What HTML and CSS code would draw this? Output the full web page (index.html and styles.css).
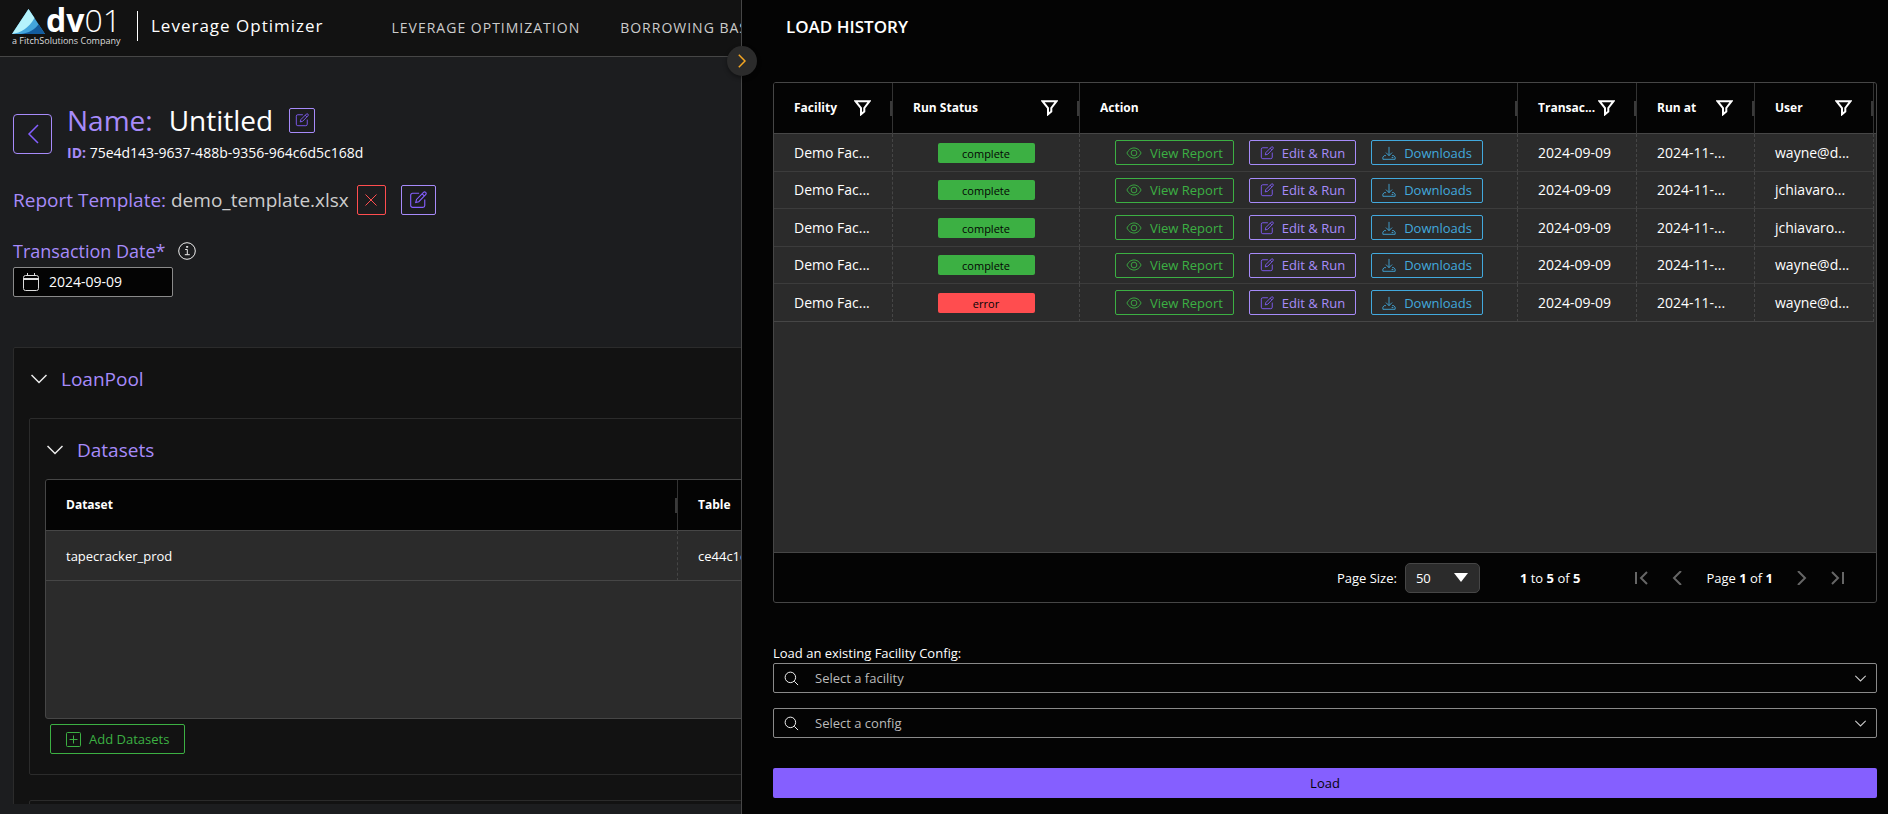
FILE: index.html
```html
<!DOCTYPE html>
<html lang="en">
<head>
<meta charset="utf-8">
<title>Leverage Optimizer</title>
<link rel="stylesheet" href="styles.css">
</head>
<body>
<svg class="sprite" aria-hidden="true">
  <symbol id="i-edit" viewBox="0 0 16 16"><path d="M9 2H3.2A1.7 1.7 0 0 0 1.5 3.700v9.100a1.700 1.700 0 0 0 1.700 1.700h9.100a1.700 1.700 0 0 0 1.700-1.700V7.500M6 10.200l.7-2.700 6.200-6.200a1.300 1.300 0 0 1 1.900 1.900L8.700 9.500zM11.700 2.500l1.900 1.900"/></symbol>
  <symbol id="i-eye" viewBox="0 0 18 14"><path d="M1 7c2-3.800 4.800-5.700 8-5.700S15 3.200 17 7c-2 3.800-4.800 5.700-8 5.700S3 10.800 1 7z"/><circle cx="9" cy="7" r="3.200"/></symbol>
  <symbol id="i-download" viewBox="0 0 16 16"><path d="M8 1v10M4.500 7.500L8 11 11.500 7.500M4.500 11H2.500L1 12.700v2.500h14v-2.500L13.500 11h-2M11 13.200h2"/></symbol>
  <symbol id="i-filter" viewBox="0 0 17 16"><path d="M1.500 1.200h14L10.300 8v3.600L7 14.300V8z"/></symbol>
  <symbol id="i-down" viewBox="0 0 16 10"><path d="M.5 1L8 8.500 15.500 1"/></symbol>
  <symbol id="i-search" viewBox="0 0 16 16"><circle cx="6.800" cy="6.800" r="5.600"/><path d="M11 11l4 4"/></symbol>
</svg>

<header class="topbar">
  <div class="brand">
    <svg class="mark" viewBox="0 0 33 26" aria-hidden="true"><path d="M16.500 0L33 25H0z" fill="#43a5dc"/><path d="M16.500 0L0 25c9-1 17-6 22.500-15.900z" fill="#b5f3fc"/><path d="M26.500 15.200L33 25H9c8-1 13.500-4.500 17.500-9.800z" fill="#145c9e"/></svg>
    <span class="wordmark"><b>dv</b>01</span>
    <small class="byline">a FitchSolutions Company</small>
  </div>
  <span class="product">Leverage Optimizer</span>
  <nav class="nav"><a href="#">LEVERAGE OPTIMIZATION</a><a href="#">BORROWING BASE</a></nav>
</header>

<main class="page">
  <section class="run-head">
    <button class="back" aria-label="Back"><svg viewBox="0 0 12 20" class="icon back-icon"><path d="M11 1L2 10l9 9"/></svg></button>
    <div>
      <h1 class="name"><span class="accent">Name:</span><span>Untitled</span><button class="square small" aria-label="Edit name"><svg class="icon i14"><use href="#i-edit"/></svg></button></h1>
      <p class="run-id"><b class="accent">ID:</b> 75e4d143-9637-488b-9356-964c6d5c168d</p>
    </div>
  </section>
  <div class="template"><p><span class="accent">Report Template:</span> demo_template.xlsx</p>
    <div class="template-actions">
      <button class="square remove" aria-label="Remove template"><svg class="icon i12" viewBox="0 0 12 12"><path d="M.5.5l11 11M11.500.5l-11 11"/></svg></button>
      <button class="square edit" aria-label="Edit template"><svg class="icon i18"><use href="#i-edit"/></svg></button>
    </div>
  </div>
  <div class="date-field">
    <div class="date-label"><label class="accent" for="tdate">Transaction Date*</label>
      <svg class="icon i18" viewBox="0 0 18 18" aria-hidden="true"><circle cx="9" cy="9" r="8.300"/><path d="M7.200 7.500H9.300v5M6.800 12.700h5M8.500 4.500h1.300v.8H8.500z"/></svg></div>
    <div class="date-box"><svg class="icon cal" viewBox="0 0 16 18" aria-hidden="true"><rect x=".5" y="2.500" width="15" height="15" rx="2"/><path d="M.5 5.500h15M.5 6.500h15M4.500 0v3M11.500 0v3"/></svg><input id="tdate" value="2024-09-09"></div>
  </div>

  <div class="panels">
    <section class="panel">
      <h2 class="panel-title"><svg class="icon chev"><use href="#i-down"/></svg><span>LoanPool</span></h2>
      <section class="panel inner">
        <h2 class="panel-title"><svg class="icon chev"><use href="#i-down"/></svg><span>Datasets</span></h2>
        <div class="grid datasets">
          <table class="table">
            <colgroup><col class="c-dataset"><col></colgroup>
            <thead><tr><th><div class="th">Dataset</div></th><th><div class="th">Table</div></th></tr></thead>
            <tbody><tr><td>tapecracker_prod</td><td>ce44c1e7-5b0d-4a1c</td></tr></tbody>
          </table>
        </div>
        <button class="btn green add"><svg class="icon i15" viewBox="0 0 15 15"><rect x=".5" y=".5" width="14" height="14" rx="1"/><path d="M3.500 7.500h8M7.500 3.500v8"/></svg>Add Datasets</button>
      </section>
      <section class="panel inner next"></section>
    </section>
  </div>
</main>

<aside class="drawer">
  <button class="toggle" aria-label="Close history"><svg class="icon toggle-icon" viewBox="0 0 8 14"><path d="M.8.8L7 7 .8 13.200"/></svg></button>
  <h2 class="drawer-title">LOAD HISTORY</h2>
  <div class="grid history">
    <div class="history-body">
    <table class="table">
      <colgroup><col class="c-s"><col class="c-status"><col><col class="c-s"><col class="c-run"><col class="c-s"></colgroup>
      <thead><tr>
        <th><div class="th"><span>Facility</span><svg class="icon filter"><use href="#i-filter"/></svg></div></th>
        <th><div class="th"><span>Run Status</span><svg class="icon filter"><use href="#i-filter"/></svg></div></th>
        <th><div class="th">Action</div></th>
        <th><div class="th"><span>Transac...</span><svg class="icon filter"><use href="#i-filter"/></svg></div></th>
        <th><div class="th"><span>Run at</span><svg class="icon filter"><use href="#i-filter"/></svg></div></th>
        <th><div class="th"><span>User</span><svg class="icon filter"><use href="#i-filter"/></svg></div></th>
      </tr></thead>
      <tbody id="rows"></tbody>
    </table>
    </div>
    <footer class="pager">
      <label for="psize">Page Size:</label>
      <span class="size-wrap"><select id="psize"><option>50</option></select><svg class="tri" viewBox="0 0 14 9" aria-hidden="true"><path d="M0 0h14L7 9z"/></svg></span>
      <span class="count"><b>1</b> to <b>5</b> of <b>5</b></span>
      <div class="pages">
        <button aria-label="First page"><svg class="icon pg" viewBox="0 0 14 14"><path d="M2 1v12M13 1L7 7l6 6"/></svg></button>
        <button aria-label="Previous page"><svg class="icon pg" viewBox="0 0 14 14"><path d="M11 0L4 7l7 7"/></svg></button>
        <span>Page <b>1</b> of <b>1</b></span>
        <button aria-label="Next page"><svg class="icon pg" viewBox="0 0 14 14"><path d="M3 0l7 7-7 7"/></svg></button>
        <button aria-label="Last page"><svg class="icon pg" viewBox="0 0 14 14"><path d="M12 1v12M1 1l6 6-6 6"/></svg></button>
      </div>
    </footer>
  </div>
  <form class="load-form">
    <label for="facility">Load an existing Facility Config:</label>
    <div class="combo"><svg class="icon i15"><use href="#i-search"/></svg><input id="facility" placeholder="Select a facility"><svg class="icon caret"><use href="#i-down"/></svg></div>
    <div class="combo"><svg class="icon i15"><use href="#i-search"/></svg><input aria-label="Config" placeholder="Select a config"><svg class="icon caret"><use href="#i-down"/></svg></div>
    <button type="button" class="load">Load</button>
  </form>
</aside>
<script src="app.js"></script>
</body>
</html>
```
FILE: app.js
```js
const runs = [
  ['complete', 'wayne@d...'],
  ['complete', 'jchiavaro...'],
  ['complete', 'jchiavaro...'],
  ['complete', 'wayne@d...'],
  ['error', 'wayne@d...'],
];
document.getElementById('rows').innerHTML = runs.map(([status, user]) => `
  <tr>
    <td>Demo Fac...</td>
    <td><span class="status ${status}">${status}</span></td>
    <td><div class="actions">
      <button class="btn green"><svg class="icon eye"><use href="#i-eye"/></svg>View Report</button>
      <button class="btn purple"><svg class="icon i14"><use href="#i-edit"/></svg>Edit &amp; Run</button>
      <button class="btn blue"><svg class="icon i14"><use href="#i-download"/></svg>Downloads</button>
    </div></td>
    <td>2024-09-09</td>
    <td>2024-11-...</td>
    <td>${user}</td>
  </tr>`).join('');
```
FILE: styles.css
```css
* { box-sizing: border-box; }
body {
  margin: 0;
  height: 100vh;
  display: flex;
  flex-direction: column;
  overflow: hidden;
  position: relative;
  background: #1c1d1f;
  color: #fff;
  font: 14px/20px "Segoe UI", "Open Sans", "Noto Sans", sans-serif;
}
h1, h2, p { margin: 0; font-weight: 400; }
button, input, select { font: inherit; color: inherit; margin: 0; padding: 0; }
button { background: none; border: 0; cursor: pointer; }
.sprite { display: none; }
.icon { fill: none; stroke: currentColor; flex: none; display: block; }
.i12 { width: 12px; height: 12px; }
.i14 { width: 14px; height: 14px; }
.i15 { width: 15px; height: 15px; }
.i18 { width: 18px; height: 18px; }
.accent { color: #a78bfa; }

/* top bar */
.topbar {
  flex: none;
  height: 57px;
  display: flex;
  align-items: center;
  background: #121212;
  border-bottom: 1px solid #464646;
  padding-left: 12px;
  white-space: nowrap;
}
.brand {
  display: grid;
  grid-template-columns: 34px auto;
  width: 125px;
  padding-bottom: 5px;
}
.mark { width: 33px; height: 26px; margin-top: 4px; }
.wordmark { font: 300 32px/30px "Open Sans", sans-serif; }
.wordmark b { font-weight: 700; }
.byline { grid-column: 1 / 3; font: 9px/12px "Open Sans", sans-serif; color: #ddd; }
.product { border-left: 1px solid #fff; padding-left: 13px; line-height: 30px; font-size: 17px; letter-spacing: 1px; margin-bottom: 4px; }
.nav { display: flex; gap: 40px; margin-left: 68px; }
.nav a { color: #ccc; text-decoration: none; letter-spacing: 1px; }

/* left page */
.page { flex: 1; min-height: 0; display: flex; flex-direction: column; padding: 44px 13px 10px; }
.run-head { display: flex; align-items: center; gap: 15px; }
.back { width: 39px; height: 40px; border: 1px solid #a78bfa; border-radius: 4px; display: grid; place-items: center; color: #855fff; }
.back-icon { width: 12px; height: 20px; stroke-width: 1.500; }
.name { display: flex; align-items: center; font-size: 28px; line-height: 38px; gap: 16px; }
.run-id { line-height: 28px; }
.square { height: 30px; border: 1px solid #a78bfa; border-radius: 2px; display: grid; place-items: center; color: #855fff; }
.square.small { width: 26px; height: 25px; }
.square.remove { width: 29px; border-color: #ff4d4f; color: #ff4d4f; }
.square.edit { width: 35px; }
.template { display: flex; align-items: center; gap: 8px; font-size: 19px; margin-top: 18px; color: #ccc; }
.template-actions { display: flex; gap: 15px; }
.date-label { display: flex; align-items: center; gap: 12px; font-size: 18px; line-height: 26px; margin-top: 23px; }
.date-label .icon { color: #eee; }
.date-box { display: flex; align-items: center; gap: 10px; width: 160px; height: 30px; padding-left: 9px; margin-top: 3px; background: #040404; border: 1px solid #8a8a8a; border-radius: 2px; }
.date-box input { width: 100px; background: none; border: 0; outline: 0; }
.cal { width: 16px; height: 18px; color: #ddd; }

.panels { flex: 1; min-height: 0; overflow: hidden; margin-top: 50px; }
.panel { background: #121212; border: 1px solid #2b2b2b; border-radius: 2px; padding: 15px; }
.panel-title { display: flex; align-items: center; gap: 14px; font-size: 19px; line-height: 32px; padding: 0 2px 2px; color: #a78bfa; }
.chev { width: 16px; height: 10px; color: #eee; stroke-width: 1.500; }
.inner { margin-top: 21px; }
.inner .grid { margin-top: 11px; }
.inner.next { margin-top: 25px; height: 200px; }

/* buttons */
.btn { display: flex; align-items: center; gap: 8px; height: 25px; padding: 0 10px; border: 1px solid currentColor; border-radius: 2px; font-size: 13px; }
.btn.add { margin: 5px 0 5px 5px; height: 30px; padding: 0 15px; }
.green { color: #3cb043; }
.purple { color: #a78bfa; }
.purple .icon { color: #855fff; }
.blue { color: #42a9dd; }
.eye { width: 16px; height: 14px; }

/* grids */
.grid { border: 1px solid #464646; border-radius: 3px; background: #2b2b2b; overflow: hidden; }
.datasets { height: 240px; }
.table { width: 100%; border-collapse: separate; border-spacing: 0; table-layout: fixed; }
.table th { height: 51px; padding: 0; background: #040404; border-right: 1px solid #333; border-bottom: 1px solid #464646; text-align: left; font-size: 12px; font-weight: 700; }
.th { height: 15px; display: flex; align-items: center; justify-content: space-between; border-right: 2px solid #3a3a3a; padding: 0 19px 0 20px; }
.th span { white-space: nowrap; line-height: 20px; }
.filter { width: 17px; height: 16px; stroke-width: 2; }
.table td { padding: 0 20px; border-right: 1px dashed #464646; border-bottom: 1px solid #3c3c3c; white-space: nowrap; }
.datasets td { height: 50px; font-size: 13px; border-bottom-color: #464646; }
.c-dataset { width: 632px; }
.c-s { width: 119px; }
.c-run { width: 118px; }
.c-status { width: 187px; }
.history-body { padding-right: 2px; height: 469px; background: linear-gradient(#040404 50px, #464646 50px, #464646 51px, #2b2b2b 51px); }
.history td { height: 37px; }
.history tr:nth-child(odd) td { height: 38px; }
.history tr:last-child td { border-bottom-color: #464646; }
.status { display: block; width: 97px; height: 20px; margin: 0 auto; border-radius: 2px; text-align: center; font-size: 11px; line-height: 22px; color: #040404; }
.complete { background: #3cb043; }
.error { background: #ff4d4f; }
.actions { display: flex; gap: 15px; padding-left: 15px; }

/* drawer */
.drawer { position: absolute; top: 0; bottom: 0; right: 0; left: 741px; background: #040404; border-left: 1px solid #464646; padding: 14px 11px 0 31px; }
.toggle { position: absolute; left: -15px; top: 46px; width: 30px; height: 30px; border-radius: 50%; background: #2b2b2b; color: #f5a623; display: grid; place-items: center; box-shadow: 0 2px 4px rgba(0, 0, 0, .4); }
.toggle-icon { width: 8px; height: 14px; stroke-width: 1.500; }
.drawer-title { font-size: 17px; line-height: 26px; font-weight: 600; margin: 0 0 42px 13px; }
.pager { display: flex; align-items: center; justify-content: flex-end; height: 50px; border-top: 1px solid #464646; background: #040404; padding-right: 31px; font-size: 13px; }
.size-wrap { position: relative; margin: 0 40px 0 8px; }
.size-wrap select { display: block; appearance: none; width: 75px; height: 30px; padding-left: 10px; background: #2b2b2b; border: 1px solid #464646; border-radius: 5px; }
.tri { position: absolute; right: 12px; top: 10px; width: 14px; height: 9px; fill: #fff; pointer-events: none; }
.pages { display: flex; align-items: center; gap: 22px; margin-left: 54px; }
.pages button { color: #666; }
.pg { width: 14px; height: 14px; stroke-width: 2; }
.load-form { display: flex; flex-direction: column; margin-top: 40px; font-size: 13px; }
.combo { display: flex; align-items: center; height: 30px; padding: 0 10px; gap: 16px; border: 1px solid #8a8a8a; border-radius: 2px; margin-bottom: 15px; }
.combo input { flex: 1; background: none; border: 0; outline: 0; }
.combo input::placeholder { color: #bbb; opacity: 1; }
.caret { width: 11px; height: 7px; stroke-width: 1.500; color: #ccc; }
.load { height: 30px; margin-top: 15px; background: #855fff; color: #040404; border-radius: 2px; }
```
